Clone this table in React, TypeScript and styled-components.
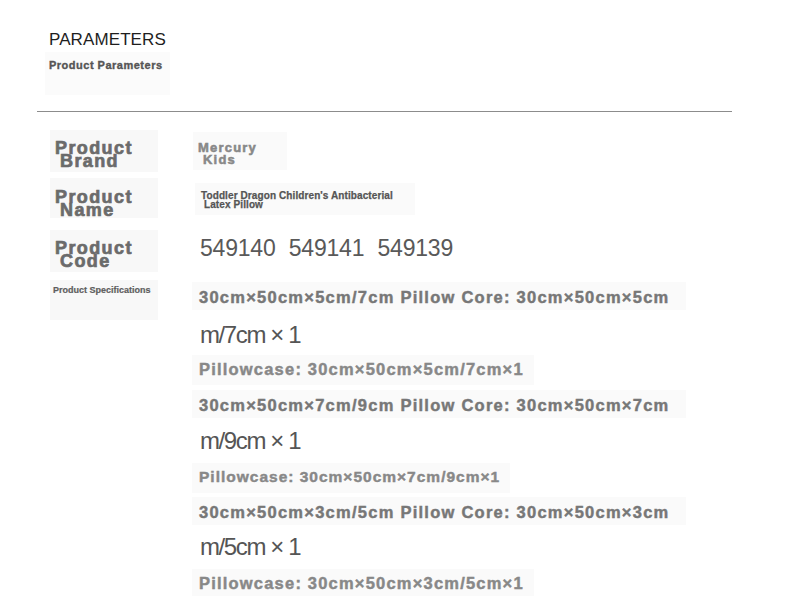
import React from "react";
import styled, { createGlobalStyle } from "styled-components";

const Global = createGlobalStyle`
  html, body { margin: 0; padding: 0; background: #fff; }
  body { font-family: "Liberation Sans", Arial, sans-serif; }
`;

const Page = styled.div`
  width: 790px;
  height: 596px;
  overflow: hidden;
  display: flex;
  flex-direction: column;
  padding-top: 30px;
  box-sizing: border-box;
  & > * { flex-shrink: 0; }
`;

const Title = styled.h1`
  margin: 0 0 0 49px;
  font-size: 17px;
  line-height: 20px;
  font-weight: 400;
  color: #1e1e1e;
  letter-spacing: 0.1px;
`;

const SubBox = styled.div`
  margin: 2px 0 0 45px;
  width: 125px;
  height: 43px;
  box-sizing: border-box;
  padding: 7px 0 0 4px;
  background: #fbfbfb;
`;

const Subtitle = styled.div`
  font-size: 11px;
  line-height: 13px;
  font-weight: 700;
  color: #555;
  letter-spacing: 0.5px;
  -webkit-text-stroke: 0.35px #555;
`;

const Divider = styled.hr`
  margin: 16px 0 0 37px;
  width: 695px;
  height: 1px;
  border: 0;
  background: #8c8c8c;
`;

const Table = styled.div`
  margin: 18px 0 0 50px;
  display: flex;
  flex-direction: column;
`;

const Row = styled.div<{ $mt: number }>`
  display: grid;
  grid-template-columns: 108px 1fr;
  column-gap: 34px;
  align-items: start;
  margin-top: ${(p) => p.$mt}px;
`;

const LabelCell = styled.div<{ $h: number; $pt: number }>`
  height: ${(p) => p.$h}px;
  box-sizing: border-box;
  padding: ${(p) => p.$pt}px 0 0 5px;
  background: #f8f8f8;
`;

const BigLabel = styled.div`
  font-size: 18px;
  line-height: 12.5px;
  font-weight: 700;
  color: #6b6b6b;
  letter-spacing: 1.4px;
  -webkit-text-stroke: 0.7px #6b6b6b;
`;

const Indent = styled.span<{ $w: number }>`
  display: inline-block;
  padding-left: ${(p) => p.$w}px;
`;

const SmallLabel = styled.div`
  font-size: 9px;
  line-height: 11px;
  font-weight: 700;
  color: #5e5e5e;
  margin-left: -2px;
  -webkit-text-stroke: 0.2px #5e5e5e;
`;

const BrandCell = styled.div`
  margin: 2px 0 0 1px;
  width: 94px;
  height: 38px;
  box-sizing: border-box;
  padding: 10px 0 0 5px;
  background: #fafafa;
  font-size: 13px;
  line-height: 11.5px;
  font-weight: 700;
  color: #888;
  letter-spacing: 1.2px;
  -webkit-text-stroke: 0.55px #888;
`;

const NameCell = styled.div`
  margin: 5px 0 0 3px;
  width: 220px;
  height: 32px;
  box-sizing: border-box;
  padding: 8px 0 0 6px;
  background: #fafafa;
  font-size: 10px;
  line-height: 9px;
  font-weight: 700;
  color: #555;
  letter-spacing: 0.1px;
  -webkit-text-stroke: 0.25px #555;
`;

const Codes = styled.div`
  margin: 5px 0 0 8px;
  font-size: 23px;
  line-height: 26px;
  color: #595959;
  letter-spacing: -0.2px;
  word-spacing: 7px;
`;

const Specs = styled.div`
  display: flex;
  flex-direction: column;
  align-items: flex-start;
`;

const SpecMain = styled.div<{ $mt: number }>`
  margin-top: ${(p) => p.$mt}px;
  width: 494px;
  height: 28px;
  box-sizing: border-box;
  padding: 5px 0 0 7px;
  background: #fafafa;
  font-size: 16.5px;
  line-height: 20px;
  font-weight: 700;
  color: #777;
  letter-spacing: 1.25px;
  -webkit-text-stroke: 0.45px #777;
  white-space: nowrap;
`;

const SpecWrap = styled.div<{ $mt: number }>`
  margin: ${(p) => p.$mt}px 0 0 8px;
  font-size: 24px;
  line-height: 28px;
  color: #555;
  letter-spacing: -1.4px;
  white-space: nowrap;
`;

const SpecCase = styled.div<{ $mt: number; $small?: boolean }>`
  margin-top: ${(p) => p.$mt}px;
  height: 30px;
  box-sizing: border-box;
  padding: 4px 10px 0 7px;
  background: #fafafa;
  font-size: ${(p) => (p.$small ? 15.5 : 16.5)}px;
  line-height: 20px;
  font-weight: 700;
  color: #888;
  letter-spacing: ${(p) => (p.$small ? 1 : 1.2)}px;
  -webkit-text-stroke: 0.45px #888;
  white-space: nowrap;
`;

const groups = [
  {
    main: "30cm×50cm×5cm/7cm Pillow Core: 30cm×50cm×5cm",
    wrap: "m/7cm × 1",
    pc: "Pillowcase: 30cm×50cm×5cm/7cm×1",
    m: [2, 11, 6],
    small: false,
  },
  {
    main: "30cm×50cm×7cm/9cm Pillow Core: 30cm×50cm×7cm",
    wrap: "m/9cm × 1",
    pc: "Pillowcase: 30cm×50cm×7cm/9cm×1",
    m: [5, 9, 8],
    small: true,
  },
  {
    main: "30cm×50cm×3cm/5cm Pillow Core: 30cm×50cm×3cm",
    wrap: "m/5cm × 1",
    pc: "Pillowcase: 30cm×50cm×3cm/5cm×1",
    m: [4, 8, 8],
    small: false,
  },
];

export default function App() {
  return (
    <Page>
      <Global />
      <Title>PARAMETERS</Title>
      <SubBox>
        <Subtitle>Product Parameters</Subtitle>
      </SubBox>
      <Divider />
      <Table>
        <Row $mt={0}>
          <LabelCell $h={42} $pt={12}>
            <BigLabel>
              Product
              <br />
              <Indent $w={5}>Brand</Indent>
            </BigLabel>
          </LabelCell>
          <BrandCell>
            Mercury
            <br />
            <Indent $w={5}>Kids</Indent>
          </BrandCell>
        </Row>
        <Row $mt={6}>
          <LabelCell $h={40} $pt={13}>
            <BigLabel>
              Product
              <br />
              <Indent $w={5}>Name</Indent>
            </BigLabel>
          </LabelCell>
          <NameCell>
            Toddler Dragon Children's Antibacterial
            <br />
            <Indent $w={3}>Latex Pillow</Indent>
          </NameCell>
        </Row>
        <Row $mt={12}>
          <LabelCell $h={42} $pt={12}>
            <BigLabel>
              Product
              <br />
              <Indent $w={5}>Code</Indent>
            </BigLabel>
          </LabelCell>
          <Codes>549140 549141 549139</Codes>
        </Row>
        <Row $mt={8}>
          <LabelCell $h={40} $pt={5}>
            <SmallLabel>Product Specifications</SmallLabel>
          </LabelCell>
          <Specs>
            {groups.map((g) => (
              <React.Fragment key={g.main}>
                <SpecMain $mt={g.m[0]}>{g.main}</SpecMain>
                <SpecWrap $mt={g.m[1]}>{g.wrap}</SpecWrap>
                <SpecCase $mt={g.m[2]} $small={g.small}>
                  {g.pc}
                </SpecCase>
              </React.Fragment>
            ))}
          </Specs>
        </Row>
      </Table>
    </Page>
  );
}
